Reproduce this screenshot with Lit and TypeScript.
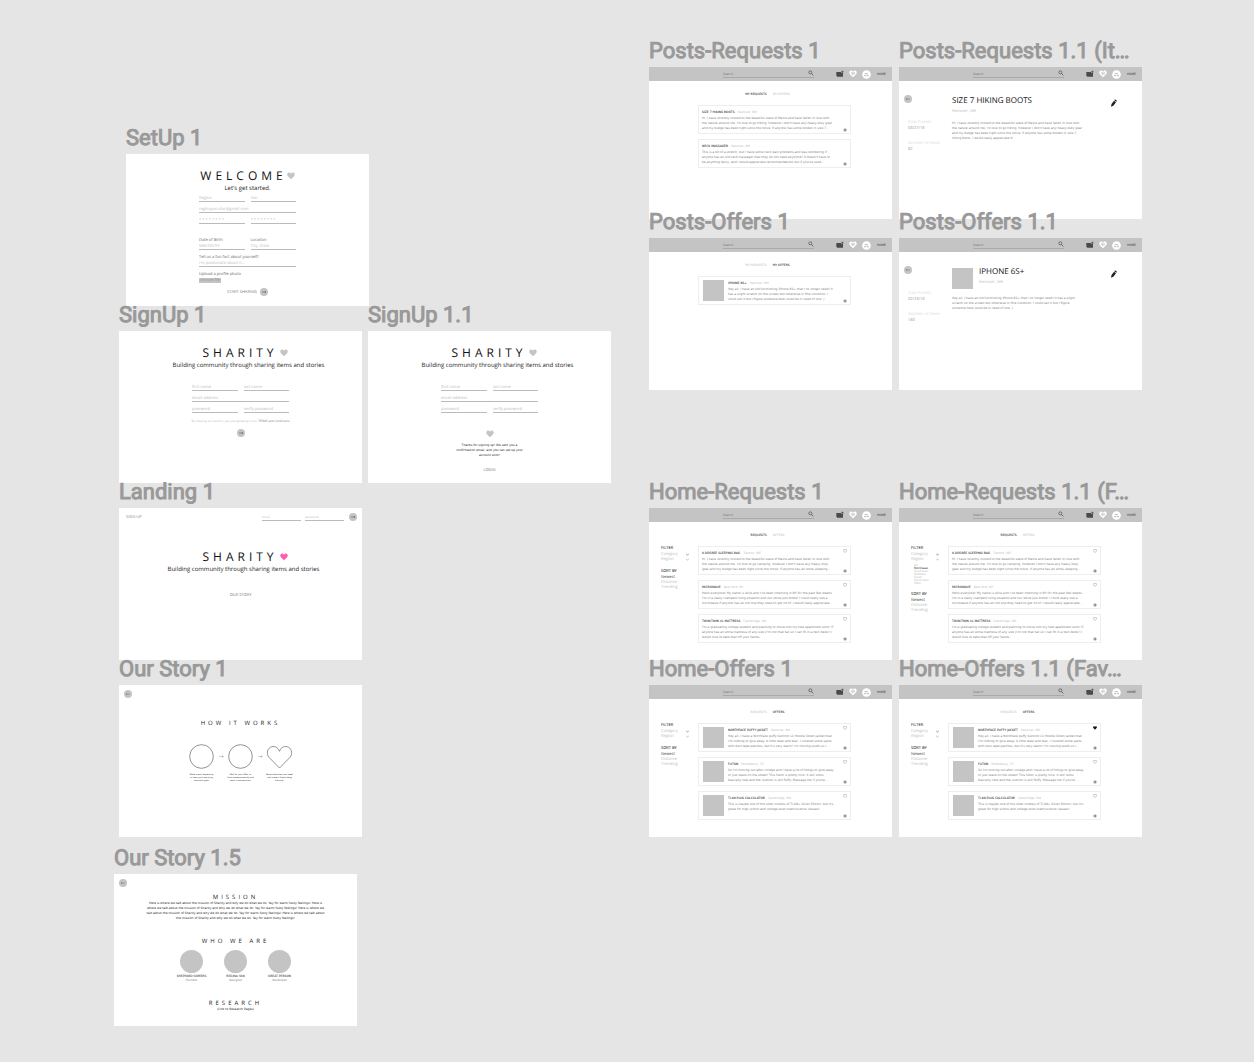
import { LitElement, html, css, svg, nothing } from "lit";
import { customElement, property } from "lit/decorators.js";

/* ---------- shared styles ---------- */

const base = css`
  * {
    box-sizing: border-box;
  }
  h2,
  h3,
  p,
  ul {
    margin: 0;
    padding: 0;
    font-weight: 400;
  }
  ul {
    list-style: none;
  }
  button,
  input {
    font: inherit;
    color: inherit;
    background: none;
    border: 0;
    border-radius: 0;
    margin: 0;
    padding: 0;
    min-width: 0;
    text-align: inherit;
    text-rendering: inherit;
  }
  button {
    cursor: pointer;
  }
  a {
    color: inherit;
    text-decoration: none;
  }
  svg {
    display: block;
    flex: none;
  }
  .lines {
    white-space: pre;
  }
  .fine {
    font-family: "DejaVu Sans", sans-serif;
    font-size: 3px;
  }
`;

/* ---------- icons ---------- */

const heartPath =
  "M12 22 L2.6 12.4 C-0.2 9.4 0.2 5 3 3 C6 0.8 10 1.6 12 5.2 C14 1.6 18 0.8 21 3 C23.8 5 24.2 9.4 21.4 12.4 Z";

const heart = (size: number, fill: string) => html`<svg
  width=${size}
  height=${size}
  viewBox="0 0 24 24"
  aria-hidden="true"
>
  <path d=${heartPath} fill=${fill} />
</svg>`;

const heartLine = (size: number, stroke: string, width: number) => html`<svg
  width=${size}
  height=${size}
  viewBox="-1 -1 26 26"
  aria-hidden="true"
>
  <path d=${heartPath} fill="none" stroke=${stroke} stroke-width=${width} />
</svg>`;

const arrowDisc = (dir: "left" | "right") => html`<svg
  width="8"
  height="8"
  viewBox="0 0 24 24"
  aria-hidden="true"
>
  <circle cx="12" cy="12" r="12" fill="#c4c4c4" />
  ${dir === "right"
    ? svg`<path d="M6 12H18M14.5 9L18 12L14.5 15" fill="none" stroke="#555" stroke-width="1.6"/>`
    : svg`<path d="M18 12H6M9.5 9L6 12L9.5 15" fill="none" stroke="#777" stroke-width="1.6"/>`}
</svg>`;

const chevron = (up: boolean, stroke: string) => html`<svg
  width="3"
  height="3"
  viewBox="0 0 12 12"
  aria-hidden="true"
>
  <path
    d=${up ? "M1 8L6 4L11 8" : "M1 4L6 8L11 4"}
    fill="none"
    stroke=${stroke}
    stroke-width="2.4"
  />
</svg>`;

const searchIcon = html`<svg width="6" height="6" viewBox="0 0 18 18" aria-hidden="true">
  <circle cx="7" cy="7" r="4.6" fill="none" stroke="#555" stroke-width="2.2" />
  <path d="M10.5 10.5L16 16" stroke="#555" stroke-width="2.6" />
</svg>`;

const postIcon = html`<svg width="8" height="8" viewBox="0 0 24 24" aria-hidden="true">
  <path d="M1 6H15V9H21V20H4L1 17Z" fill="#4a4a4a" />
  <path d="M19 2V9M15.5 5.5H23" stroke="#4a4a4a" stroke-width="2.4" />
</svg>`;

const pencilIcon = html`<svg width="8" height="8" viewBox="0 0 24 24" aria-hidden="true">
  <path d="M15 1L21 5L19 8L13 4Z" fill="#222" />
  <path d="M12 5.5L18 9.5L10 20.5L3 23L4.5 15Z" fill="#222" />
</svg>`;

const moreDot = html`<svg width="4" height="4" viewBox="0 0 12 12" aria-hidden="true">
  <circle cx="6" cy="6" r="5.4" fill="#b8b8b8" />
  <path d="M3 6H9M6.5 3.8L9 6L6.5 8.2" fill="none" stroke="#666" stroke-width="1.4" />
</svg>`;

/* ---------- artboard: a titled frame on the canvas ---------- */

@customElement("art-board")
class ArtBoard extends LitElement {
  @property() name = "";

  static styles = [
    base,
    css`
      :host {
        display: block;
        width: 243px;
      }
      .name {
        font: 400 22px/30px Roboto, sans-serif;
        color: #999;
        -webkit-text-stroke: 1px #999;
        white-space: nowrap;
        height: 30px;
      }
      .frame {
        background: #fff;
        min-height: 152px;
        display: flex;
        flex-direction: column;
      }
    `,
  ];

  render() {
    return html`<h2 class="name">${this.name}</h2>
      <section class="frame" aria-label=${this.name}><slot></slot></section>`;
  }
}

/* ---------- top bar of the signed-in pages ---------- */

@customElement("app-bar")
class AppBar extends LitElement {
  static styles = [
    base,
    css`
      :host {
        display: flex;
        align-items: center;
        height: 14px;
        padding: 0 6px 0 74px;
        background: #c4c4c4;
        font-family: "DejaVu Sans", sans-serif;
        font-size: 3px;
        line-height: 5px;
        color: #333;
      }
      .search {
        display: flex;
        align-items: flex-end;
        width: 91px;
        height: 7px;
        border-bottom: 1px solid #aaa;
        color: #888;
      }
      .search input {
        flex: 1;
        height: 5px;
      }
      .search input::placeholder {
        color: #777;
      }
      .search svg {
        margin-bottom: 1px;
      }
      nav {
        display: flex;
        align-items: center;
        gap: 5px;
        margin-left: auto;
      }
      .home {
        margin-left: 1px;
      }
    `,
  ];

  render() {
    return html`<label class="search">
        <input type="search" aria-label="Search" placeholder="Search" />
        ${searchIcon}
      </label>
      <nav>
        <button aria-label="New post">${postIcon}</button>
        <button aria-label="Favorites">
          <svg width="8" height="8" viewBox="0 0 24 24" aria-hidden="true">
            <path d=${heartPath} fill="#fff" />
            <path d="M6 9H18M9 13H12M14 13H16" stroke="#999" stroke-width="2" />
          </svg>
        </button>
        <button aria-label="Profile">
          <svg width="9" height="9" viewBox="0 0 27 27" aria-hidden="true">
            <circle cx="13.5" cy="13.5" r="13" fill="#fff" />
            <path d="M8 11H18M6 17H12M14 17H21" stroke="#999" stroke-width="2" />
          </svg>
        </button>
        <a class="home" href="#">HOME</a>
      </nav>`;
  }
}

/* ---------- one listing in a feed ---------- */

interface Post {
  title: string;
  place: string;
  text: string;
}

@customElement("post-card")
class PostCard extends LitElement {
  @property({ attribute: false }) post!: Post;
  @property({ type: Boolean }) thumb = false;
  @property() favorite: "none" | "off" | "on" = "none";

  static styles = [
    base,
    css`
      :host {
        display: flex;
        border: 1px solid #eee;
        min-height: 29px;
        padding: 2px 3px 1px;
        font-family: "DejaVu Sans", sans-serif;
        font-size: 3px;
        line-height: 5px;
      }
      .thumb {
        width: 21px;
        height: 21px;
        margin: 1px 4px 0 1px;
        background: #c4c4c4;
      }
      .main {
        flex: 1;
        min-width: 0;
        padding-top: 2px;
      }
      .head {
        display: flex;
        gap: 3px;
        height: 5px;
        margin-bottom: 1px;
        color: #bbb;
      }
      h3 {
        font-size: 3px;
        color: #000;
      }
      .lines {
        color: #808080;
      }
      .side {
        display: flex;
        flex-direction: column;
        justify-content: space-between;
        width: 4px;
      }
      .side button {
        display: block;
        height: 4px;
      }
      .side button:last-child {
        margin-top: auto;
      }
    `,
  ];

  render() {
    return html`${this.thumb ? html`<div class="thumb"></div>` : nothing}
      <div class="main">
        <div class="head">
          <h3>${this.post.title}</h3>
          <span>${this.post.place}</span>
        </div>
        <p class="lines">${this.post.text}</p>
      </div>
      <div class="side">
        ${this.favorite === "none"
          ? nothing
          : html`<button aria-label="Favorite">
              ${this.favorite === "on" ? heart(4, "#111") : heartLine(4, "#888", 3)}
            </button>`}
        <button aria-label="Open">${moreDot}</button>
      </div>`;
  }
}

/* ---------- content ---------- */

const boots: Post = {
  title: "SIZE 7 HIKING BOOTS",
  place: "Hanover, NH",
  text: `Hi, I have recently moved to the beautiful state of Maine and have fallen in love with
the nature around me. I'd love to go hiking, however I don't have any heavy-duty gear
and my budge has been tight since the move. If anyone has some broken in size 7...`,
};
const bootsFull = `Hi, I have recently moved to the beautiful state of Maine and have fallen in love with
the nature around me. I'd love to go hiking, however I don't have any heavy-duty gear
and my budge has been tight since the move. If anyone has some broken in size 7
hiking boots, I would really appreciate it!`;

const massager: Post = {
  title: "NECK MASSAGER",
  place: "Hanover, NH",
  text: `This is a bit of a stretch, but I have some neck pain problems and was wondering if
anyone has an old neck massager that they do not need anymore? It doesn't have to
be anything fancy, and I would appreciate recommendations too if you've used...`,
};
const iphone: Post = {
  title: "IPHONE 6S+",
  place: "Hanover, NH",
  text: `Hey all, I have an old functioning iPhone 6S+ that I no longer need! It
has a slight scratch on the screen but otherwise in fine condition. I
could sell it but I figure someone here could be in need of one :)`,
};
const iphoneFull = `Hey all, I have an old functioning iPhone 6S+ that I no longer need! It has a slight
scratch on the screen but otherwise in fine condition. I could sell it but I figure
someone here could be in need of one :)`;

const requests: Post[] = [
  {
    title: "0 DEGREE SLEEPING BAG",
    place: "Trenton, ME",
    text: `Hi, I have recently moved to the beautiful state of Maine and have fallen in love with
the nature around me. I'd love to go camping, however I don't have any heavy duty
gear and my budge has been tight since the move. If anyone has an extra sleeping...`,
  },
  {
    title: "MICROWAVE",
    place: "New York, NY",
    text: `Hello everyone! My name is Alice and I've been interning in NY for the past few weeks.
I'm in a really cramped living situation and our stove just broke! I could really use a
microwave if anyone has an old one they need to get rid of. I would really appreciate...`,
  },
  {
    title: "TWIN/TWIN XL MATTRESS",
    place: "Cambridge, MA",
    text: `I'm a graduating college student and planning to move into my new apartment soon! If
anyone has an extra mattress of any size (I'm not that tall so I can fit in a twin beds!) I
would love to take that off your hands.`,
  },
];

const offers: Post[] = [
  {
    title: "NORTHFACE PUFFY JACKET",
    place: "Hanover, NH",
    text: `Hey all, I have a Northface puffy Summit L3 Hoodie Down Jacket that
I'm looking to give away. A little wear and tear, I covered some spots
with duct tape patches, but it's very warm! I'm moving south so I...`,
  },
  {
    title: "FUTON",
    place: "Middlebury, VT",
    text: `So I'm moving out after college and I have a lot of things to give away
or just leave on the street! This futon is pretty nice. It still looks
basically new and the cushion is still fluffy. Message me if you're...`,
  },
  {
    title: "TI-89 PLUS CALCULATOR",
    place: "Cambridge, MA",
    text: `This is maybe one of the older models of TI-89+ Silver Edition, but it's
great for high school and college-level math/science classes!`,
  },
];

const regions = ["All", "Northeast", "Southeast", "Midwest", "South", "Northwest", "West"];

/* ---------- the canvas ---------- */

@customElement("app-root")
class AppRoot extends LitElement {
  static styles = [
    base,
    css`
      :host {
        display: block;
        position: relative;
        min-height: 100vh;
        background: #e5e5e5;
        font-family: "Open Sans", "Noto Sans", sans-serif;
        font-size: 4px;
        line-height: 5px;
        color: #222;
        text-rendering: geometricPrecision;
      }
      art-board {
        position: absolute;
      }

      /* welcome, sign-up and landing */
      .hero {
        display: flex;
        flex-direction: column;
        align-items: center;
        padding-top: 15px;
      }
      .landing {
        padding-top: 29px;
      }
      .brand {
        display: flex;
        align-items: center;
        height: 14px;
        font-size: 12px;
        line-height: 14px;
        color: #111;
      }
      .brand h3 {
        font-size: 12px;
        letter-spacing: 4px;
      }
      .sharity {
        gap: 2px;
        padding-left: 9px;
      }
      .tagline {
        margin-top: 1px;
        font-size: 6px;
        line-height: 8px;
        white-space: nowrap;
      }
      .shifted {
        padding-left: 16px;
      }
      .landing .tagline {
        padding-left: 6px;
      }
      .form {
        display: grid;
        grid-template-columns: 1fr 1fr;
        gap: 4px 6px;
        width: 97px;
        margin-top: 3px;
        color: #666;
      }
      .late {
        margin-top: 15px;
      }
      .wide {
        grid-column: 1 / -1;
      }
      .field {
        display: flex;
        flex-direction: column;
      }
      .field input {
        width: 100%;
        height: 7px;
        border-bottom: 1px solid #bbb;
        color: #bbb;
      }
      .field input::placeholder {
        color: #bbb;
      }
      .spaced {
        margin-top: 10px;
      }
      .roomy {
        margin-top: 1px;
      }
      .choose {
        justify-self: start;
        height: 5px;
        padding: 0 1px;
        background: #c4c4c4;
        color: #999;
      }
      .upload {
        display: grid;
        gap: 1px;
        margin-top: 1px;
      }
      .go {
        display: flex;
        align-items: center;
        gap: 3px;
        height: 8px;
        margin-top: 5px;
        color: #777;
      }
      .terms {
        font-size: 3px;
        line-height: 4px;
        margin: 6px 0;
        color: #bbb;
      }
      .terms a {
        color: #777;
      }
      .thanks {
        display: flex;
        flex-direction: column;
        align-items: center;
        gap: 5px;
        margin-top: 17px;
        text-align: center;
      }
      .textlink {
        margin-top: 5px;
        color: #777;
      }
      .story {
        margin-top: 20px;
        color: #777;
      }
      .login {
        display: flex;
        align-items: center;
        gap: 4px;
        height: 8px;
        margin: 5px 5px 0 7px;
        color: #888;
      }
      .login a {
        margin-right: auto;
      }
      .login .field {
        width: 39px;
        font-size: 3px;
      }
      .login button {
        margin-left: 1px;
      }

      /* our story */
      .back {
        display: block;
        height: 8px;
        margin: 5px 0 0 5px;
        align-self: flex-start;
      }
      .heading {
        font-size: 6px;
        line-height: 8px;
        letter-spacing: 3px;
        text-align: center;
      }
      .center {
        text-align: center;
      }
      .steps {
        display: flex;
        justify-content: center;
        gap: 4px;
        margin-top: 17px;
      }
      .step {
        display: grid;
        justify-items: center;
        gap: 5px;
        width: 30px;
        text-align: center;
      }
      .step .lines {
        font-family: "DejaVu Sans", sans-serif;
        font-size: 2px;
        line-height: 3px;
      }
      .to {
        width: 5px;
        margin: 10px -2px 0;
      }
      .people {
        display: flex;
        justify-content: center;
        gap: 4px;
        margin: 5px 0 17px;
      }
      .person {
        display: grid;
        justify-items: center;
        width: 40px;
        line-height: 4px;
      }
      .avatar {
        width: 23px;
        height: 23px;
        margin-bottom: 1px;
        border-radius: 50%;
        background: #c4c4c4;
      }
      .role {
        color: #888;
      }
      .how {
        margin-top: 21px;
      }
      .mission {
        margin-top: 6px;
      }
      .about {
        margin: 0 0 16px;
      }

      /* feeds */
      .tabs {
        display: flex;
        justify-content: center;
        gap: 6px;
        height: 5px;
        margin: 11px 0 8px;
        padding-right: 6px;
        color: #bbb;
      }
      .on {
        color: #000;
      }
      .feed {
        display: grid;
        grid-template-columns: 28px 1fr;
        column-gap: 9px;
        margin: 0 41px 0 12px;
        align-items: start;
      }
      .cards {
        display: grid;
        gap: 5px;
        grid-column: 2;
      }
      .side {
        color: #bbb;
      }
      .side h3 {
        font-size: 4px;
        color: #000;
        line-height: 6px;
      }
      .drop {
        display: flex;
        justify-content: space-between;
        align-items: center;
        width: 100%;
        height: 5px;
      }
      .side .sort {
        margin-top: 7px;
      }
      .side button {
        display: flex;
        height: 5px;
      }
      .side button.on {
        color: #444;
      }
      .regions {
        margin: 2px 0 0 3px;
        font-size: 3px;
        line-height: 3px;
      }

      /* listing details */
      .detail {
        display: grid;
        grid-template-columns: 42px 1fr 12px;
        column-gap: 6px;
        margin: 14px 20px 0 5px;
        align-items: start;
      }
      .detail .back {
        margin: 0;
      }
      .meta {
        margin: 17px 0 0 4px;
        line-height: 6px;
        color: #ddd;
        white-space: nowrap;
      }
      .meta dt,
      .meta dd {
        margin: 0;
      }
      .meta dd {
        color: #999;
        margin-bottom: 9px;
      }
      .item {
        display: flex;
        gap: 6px;
        margin-bottom: 7px;
      }
      .item h3 {
        font-size: 8px;
        line-height: 12px;
        color: #111;
        white-space: nowrap;
      }
      .item p {
        margin-top: 2px;
        color: #bbb;
      }
      .photo {
        width: 21px;
        height: 21px;
        margin-top: 2px;
        background: #c4c4c4;
      }
      .copy {
        color: #808080;
      }
      .edit {
        display: block;
        height: 8px;
        margin-top: 4px;
      }
    `,
  ];

  private brand(text: string, color: string) {
    return html`<div class="brand ${text === "SHARITY" ? "sharity" : ""}">
      <h3>${text}</h3>
      ${heart(8, color)}
    </div>`;
  }

  private field(hint: string, type = "text", wide = false) {
    return html`<label class="field ${wide ? "wide" : ""}">
      <input type=${type} aria-label=${hint} placeholder=${hint} />
    </label>`;
  }

  private signUp() {
    return html`${this.brand("SHARITY", "#c4c4c4")}
      <p class="tagline shifted">Building community through sharing items and stories</p>
      <div class="form late">
        ${this.field("first name")} ${this.field("last name")}
        ${this.field("email address", "email", true)} ${this.field("password", "password")}
        ${this.field("verify password", "password")}
      </div>`;
  }

  private back() {
    return html`<button class="back" aria-label="Back">${arrowDisc("left")}</button>`;
  }

  private tabs(names: string[], active: number) {
    return html`<nav class="tabs fine">
      ${names.map((n, i) => html`<a href="#" class=${i === active ? "on" : ""}>${n}</a>`)}
    </nav>`;
  }

  private posts(list: Post[], active: number) {
    return html`<app-bar></app-bar>
      ${this.tabs(["MY REQUESTS", "MY OFFERS"], active)}
      <div class="feed">
        <div class="cards">
          ${list.map((p) => html`<post-card .post=${p} ?thumb=${active === 1}></post-card>`)}
        </div>
      </div>`;
  }

  private home(list: Post[], active: number, open = false, favorite = -1) {
    return html`<app-bar></app-bar>
      ${this.tabs(["REQUESTS", "OFFERS"], active)}
      <div class="feed">
        <aside class="side">
          <h3>FILTER</h3>
          <button class="drop">Category ${chevron(false, "#555")}</button>
          <button class="drop">Region ${chevron(open, "#999")}</button>
          ${open
            ? html`<ul class="regions">
                ${regions.map(
                  (r) => html`<li class=${r === "Northeast" ? "on" : ""}>${r}</li>`
                )}
              </ul>`
            : nothing}
          <h3 class="sort">SORT BY</h3>
          <button class="on">Newest</button>
          <button>Distance</button>
          <button>Trending</button>
        </aside>
        <div class="cards">
          ${list.map(
            (p, i) => html`<post-card
              .post=${p}
              ?thumb=${active === 1}
              favorite=${i === favorite ? "on" : "off"}
            ></post-card>`
          )}
        </div>
      </div>`;
  }

  private detail(post: Post, text: string, date: string, views: string, photo = false) {
    return html`<app-bar></app-bar>
      <div class="detail">
        <div>
          ${this.back()}
          <dl class="meta">
            <dt>Date Posted</dt>
            <dd>${date}</dd>
            <dt>Number of Views</dt>
            <dd>${views}</dd>
          </dl>
        </div>
        <div>
          <div class="item">
            ${photo ? html`<div class="photo"></div>` : nothing}
            <div>
              <h3>${post.title}</h3>
              <p>${post.place}</p>
            </div>
          </div>
          <p class="lines fine copy">${text}</p>
        </div>
        <button class="edit" aria-label="Edit">${pencilIcon}</button>
      </div>`;
  }

  private setUp() {
    return html`<div class="hero">
      ${this.brand("WELCOME", "#c4c4c4")}
      <p class="tagline">Let's get started.</p>
      <div class="form">
        <label class="field"><input aria-label="First name" value="Regina" /></label>
        <label class="field"><input aria-label="Last name" value="Yan" /></label>
        <label class="field wide"
          ><input type="email" aria-label="Email" value="reginayan.star@gmail.com"
        /></label>
        <label class="field"><input aria-label="Password" value="* * * * * * * *" /></label>
        <label class="field"><input aria-label="Verify password" value="* * * * * * * *" /></label>
        <label class="field spaced">Date of Birth<input placeholder="MM/DD/YY" /></label>
        <label class="field spaced">Location<input placeholder="City, State" /></label>
        <label class="field wide roomy"
          >Tell us a fun fact about yourself!<input placeholder="I'm passionate about it..."
        /></label>
        <div class="upload wide">
          <span>Upload a profile photo</span>
          <button class="choose">choose file</button>
        </div>
      </div>
      <button class="go">START SHARING ${arrowDisc("right")}</button>
    </div>`;
  }

  private landing() {
    return html`<div class="login">
        <a href="#">SIGN UP</a>
        ${this.field("email", "email")} ${this.field("password", "password")}
        <button aria-label="Log in">${arrowDisc("right")}</button>
      </div>
      <div class="hero landing">
        ${this.brand("SHARITY", "#ff5eb0")}
        <p class="tagline">Building community through sharing items and stories</p>
        <a class="story" href="#">OUR STORY</a>
      </div>`;
  }

  private howItWorks() {
    const ring = html`<svg width="25" height="25" viewBox="0 0 75 75" aria-hidden="true">
      <circle cx="37.5" cy="37.5" r="35.5" fill="none" stroke="#777" stroke-width="2.4" />
    </svg>`;
    const arrow = html`<svg class="to" width="5" height="5" viewBox="0 0 15 15" aria-hidden="true">
      <path d="M1 7.5H13M9.5 4.5L13 7.5L9.5 10.5" fill="none" stroke="#888" stroke-width="1.4" />
    </svg>`;
    return html`${this.back()}
      <h3 class="heading how">HOW IT WORKS</h3>
      <div class="steps">
        <div class="step">
          ${ring}
          <p class="lines">${"Make a post requesting\nor item you have lying\naround to give."}</p>
        </div>
        ${arrow}
        <div class="step">
          ${ring}
          <p class="lines">${"Wait for your offer, or\nfrom someone nearby and\nreach a conversation."}</p>
        </div>
        ${arrow}
        <div class="step">
          <svg width="25" height="25" viewBox="0 0 75 75" aria-hidden="true">
            <path
              d="M37.5 72L6 40C-2 31 0 16 10 10C21 4 33 9 37.5 22C42 9 54 4 65 10C75 16 77 31 69 40Z"
              fill="none"
              stroke="#777"
              stroke-width="2.4"
            />
          </svg>
          <p class="lines">${"Be excited when you meet\nand make a friend along\nthe way!"}</p>
        </div>
      </div>`;
  }

  private ourStory() {
    const people = [
      ["SHEPPARD SOMERS", "founder"],
      ["REGINA YAN", "designer"],
      ["GREAT PERSON", "developer"],
    ];
    return html`${this.back()}
      <h3 class="heading mission">MISSION</h3>
      <p class="lines fine center about">${`Here is where we talk about the mission of Sharity and why we do what we do. Yay for warm fuzzy feelings! Here is
where we talk about the mission of Sharity and why we do what we do. Yay for warm fuzzy feelings! Here is where we
talk about the mission of Sharity and why we do what we do. Yay for warm fuzzy feelings! Here is where we talk about
the mission of Sharity and why we do what we do. Yay for warm fuzzy feelings!`}</p>
      <h3 class="heading">WHO WE ARE</h3>
      <div class="people">
        ${people.map(
          ([name, role]) => html`<div class="person fine">
            <div class="avatar"></div>
            <span>${name}</span>
            <span class="role">${role}</span>
          </div>`
        )}
      </div>
      <h3 class="heading">RESEARCH</h3>
      <a class="fine center" href="#">(Link to Research Pages)</a>`;
  }

  render() {
    const boards: [string, number, number, unknown][] = [
      ["SetUp 1", 126, 154, this.setUp()],
      [
        "SignUp 1",
        119,
        331,
        html`<div class="hero">
          ${this.signUp()}
          <p class="terms">
            By creating an account, you are agreeing to our <a href="#">TERMS and Conditions</a>
          </p>
          <button aria-label="Create account">${arrowDisc("right")}</button>
        </div>`,
      ],
      [
        "SignUp 1.1",
        368,
        331,
        html`<div class="hero">
          ${this.signUp()}
          <div class="thanks">
            ${heart(8, "#c4c4c4")}
            <p class="lines fine">${"Thanks for signing up! We sent you a\nconfirmation email, and you can set up your\naccount soon!"}</p>
            <a class="textlink" href="#">LOGIN</a>
          </div>
        </div>`,
      ],
      ["Landing 1", 119, 508, this.landing()],
      ["Our Story 1", 119, 685, this.howItWorks()],
      ["Our Story 1.5", 114, 874, this.ourStory()],
      ["Posts-Requests 1", 649, 67, this.posts([boots, massager], 0)],
      ["Posts-Requests 1.1 (It…", 899, 67, this.detail(boots, bootsFull, "03/27/18", "82")],
      ["Posts-Offers 1", 649, 238, this.posts([iphone], 1)],
      ["Posts-Offers 1.1", 899, 238, this.detail(iphone, iphoneFull, "02/23/18", "180", true)],
      ["Home-Requests 1", 649, 508, this.home(requests, 0)],
      ["Home-Requests 1.1 (F…", 899, 508, this.home(requests, 0, true)],
      ["Home-Offers 1", 649, 685, this.home(offers, 1)],
      ["Home-Offers 1.1 (Fav…", 899, 685, this.home(offers, 1, false, 0)],
    ];
    return boards.map(
      ([name, x, y, body]) => html`<art-board name=${name} style="left:${x}px;top:${y - 30}px"
        >${body}</art-board
      >`
    );
  }
}
